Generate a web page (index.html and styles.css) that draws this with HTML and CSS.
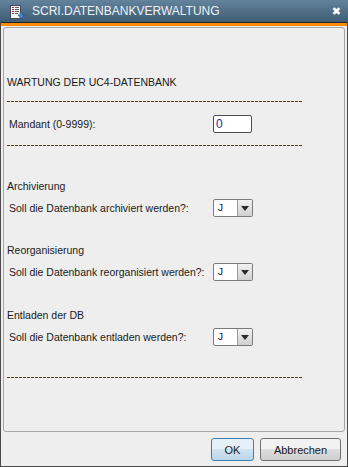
FILE: index.html
```html
<!DOCTYPE html>
<html>
<head>
<meta charset="utf-8">
<link rel="stylesheet" href="styles.css">
</head>
<body>
<div class="window">
  <div class="titlebar">
    <svg class="app-icon" width="16" height="16" viewBox="0 0 16 16">
      <rect x="1.5" y="1.5" width="10" height="13" fill="#f4f4f4" stroke="#3a4a5a"/>
      <rect x="3" y="3" width="2" height="1" fill="#c0302a"/>
      <rect x="6" y="3" width="4" height="1" fill="#5a5a5a"/>
      <rect x="3" y="5" width="2" height="1" fill="#c0302a"/>
      <rect x="6" y="5" width="4" height="1" fill="#5a5a5a"/>
      <rect x="3" y="7" width="2" height="1" fill="#c0302a"/>
      <rect x="6" y="7" width="4" height="1" fill="#5a5a5a"/>
      <rect x="3" y="9" width="2" height="1" fill="#c0302a"/>
      <rect x="6" y="9" width="3" height="1" fill="#5a5a5a"/>
      <path d="M11 8.5 h2.5 v2.5 h2 l-3.25 4 l-3.25 -4 h2 z" fill="#4a8ad0" stroke="#23507e" stroke-width="0.6"/>
    </svg>
    <span class="title">SCRI.DATENBANKVERWALTUNG</span>
    <span class="close">&#x2716;</span>
  </div>
  <div class="accent"></div>
  <div class="panel">
    <div class="heading">WARTUNG DER UC4-DATENBANK</div>
    <div class="dashes"></div>
    <div class="row row-mandant">
      <span class="label">Mandant (0-9999):</span>
      <span class="textbox">0</span>
    </div>
    <div class="dashes"></div>
    <div class="section s-first">Archivierung</div>
    <div class="row">
      <span class="label">Soll die Datenbank archiviert werden?:</span>
      <span class="select"><span class="sel-value">J</span><span class="sel-btn"><span class="tri"></span></span></span>
    </div>
    <div class="section s-second">Reorganisierung</div>
    <div class="row">
      <span class="label">Soll die Datenbank reorganisiert werden?:</span>
      <span class="select"><span class="sel-value">J</span><span class="sel-btn"><span class="tri"></span></span></span>
    </div>
    <div class="section s-third">Entladen der DB</div>
    <div class="row">
      <span class="label">Soll die Datenbank entladen werden?:</span>
      <span class="select"><span class="sel-value">J</span><span class="sel-btn"><span class="tri"></span></span></span>
    </div>
    <div class="dashes d-last"></div>
  </div>
  <div class="footer">
    <button class="btn btn-ok">OK</button>
    <button class="btn btn-cancel">Abbrechen</button>
  </div>
</div>
</body>
</html>
```

FILE: styles.css
```css
html, body {
  margin: 0;
  padding: 0;
}
body {
  width: 348px;
  height: 467px;
  background: #eeeeee;
  font-family: "Liberation Sans", Arial, sans-serif;
  font-size: 10.5px;
  color: #1a1a1a;
}
.window {
  width: 348px;
  height: 467px;
  box-sizing: border-box;
  border-left: 1px solid #4a4a4a;
  border-right: 1px solid #4a4a4a;
  border-bottom: 1px solid #4a4a4a;
  display: flex;
  flex-direction: column;
  background: #eeeeee;
}
.titlebar {
  height: 22px;
  flex: none;
  display: flex;
  align-items: center;
  background: linear-gradient(#63829b, #3e5c74);
  color: #ffffff;
  padding: 0 0 0 9px;
  margin: 0 -1px;
}
.app-icon {
  flex: none;
  margin-top: 1px;
}
.title {
  margin-left: 7px;
  font-size: 12px;
  color: #eef2f5;
}
.close {
  margin-left: auto;
  margin-right: 7px;
  font-size: 11px;
  color: #ffffff;
  font-family: "DejaVu Sans", sans-serif;
  font-weight: bold;
}
.accent {
  flex: none;
  height: 3px;
  border-top: 1px solid #20262c;
  background: #ff8c00;
}
.panel {
  flex: 1;
  margin: 1px 2px 0 2px;
  border: 1px solid #a6a6a6;
  border-radius: 3px;
  padding: 0 0 0 3px;
}
.heading {
  margin-top: 47px;
  line-height: 14px;
  height: 14px;
}
.dashes {
  margin-top: 12px;
  width: 295px;
  height: 1px;
  background: repeating-linear-gradient(90deg, #5a3a10 0 3px, transparent 3px 4px);
}
.row {
  display: flex;
  align-items: center;
  height: 18px;
  padding-left: 2px;
  white-space: nowrap;
}
.row-mandant {
  margin-top: 13px;
  margin-bottom: 11px;
}
.label {
  width: 204px;
  flex: none;
  line-height: 14px;
}
.textbox {
  width: 35px;
  height: 16px;
  border: 1px solid #4e4e4e;
  border-radius: 2px;
  background: #ffffff;
  line-height: 16px;
  padding-left: 2px;
  color: #2a2a9a;
  font-size: 12px;
}
.section {
  line-height: 14px;
  height: 14px;
  margin-bottom: 6px;
}
.s-first {
  margin-top: 33px;
}
.s-second {
  margin-top: 26px;
}
.s-third {
  margin-top: 27px;
}
.select {
  display: flex;
  width: 38px;
  height: 16px;
  border: 1px solid #7a7a7a;
  border-radius: 2px;
  background: #ffffff;
}
.sel-value {
  width: 20px;
  padding-left: 3px;
  line-height: 16px;
  font-family: "Liberation Mono", monospace;
  font-size: 11px;
  color: #1a1a50;
}
.sel-btn {
  flex: 1;
  border-left: 1px solid #9a9a9a;
  background: linear-gradient(#f2f2f2, #cfcfcf);
  display: flex;
  align-items: center;
  justify-content: center;
  border-radius: 0 1px 1px 0;
}
.tri {
  width: 0;
  height: 0;
  border-left: 4px solid transparent;
  border-right: 4px solid transparent;
  border-top: 5px solid #2a2a2a;
}
.d-last {
  margin-top: 31px;
}
.footer {
  flex: none;
  height: 34px;
  display: flex;
  align-items: center;
  justify-content: flex-end;
  gap: 6px;
  padding-right: 6px;
}
.btn {
  height: 23px;
  font-family: "Liberation Sans", Arial, sans-serif;
  font-size: 11px;
  color: #1a1a1a;
  border: 1px solid #707070;
  border-radius: 3px;
  background: linear-gradient(#f2f2f2 0 50%, #dddddd 50%, #cfcfcf);
  padding: 0;
  margin-top: 1px;
}
.btn-ok {
  width: 43px;
  border-color: #3c7fb1;
  background: linear-gradient(#e6f0f8 0 50%, #cfe3f2 50%, #bcd6ea);
}
.btn-cancel {
  width: 81px;
}
```
